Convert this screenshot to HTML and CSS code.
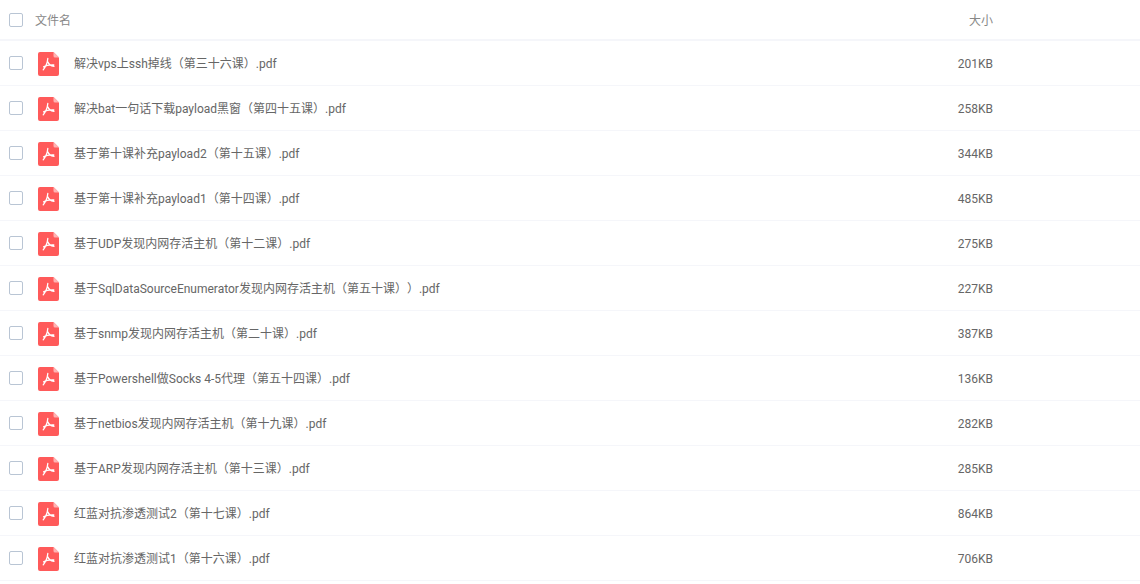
FILE: index.html
```html
<!DOCTYPE html>
<html lang="zh-CN">
<head>
    <meta charset="UTF-8">
    <title>文件列表</title>
    <link rel="stylesheet" href="styles.css">
</head>
<body>
    <svg class="icon-defs" width="0" height="0">
        <symbol id="pdf" viewBox="0 0 21 24">
            <path d="M2 0H15.5L21 5.5V22a2 2 0 0 1-2 2H2a2 2 0 0 1-2-2V2a2 2 0 0 1 2-2z" fill="#ff5a5a"/>
            <path d="M15.5 0L21 5.5H17a1.500 1.500 0 0 1-1.500-1.500z" fill="#ffb3b3"/>
            <path d="M9.800 6.500C9.500 9.800 8.300 14 5.200 17.800M9.800 9.800C10.600 12.500 12.500 14 16 14.300M5.600 14.900C8 13.300 11 12.800 15.800 13" fill="none" stroke="#fff" stroke-width="1.300" stroke-linecap="round"/>
        </symbol>
    </svg>
    <div class="file-list">
        <div class="list-head">
            <span class="check"></span>
            <span class="head-name">文件名</span>
            <span class="head-size">大小</span>
        </div>
        <div class="file-row">
            <span class="check"></span>
            <svg class="file-icon"><use href="#pdf"/></svg>
            <span class="file-name">解决vps上ssh掉线（第三十六课）.pdf</span>
            <span class="file-size">201KB</span>
        </div>
        <div class="file-row">
            <span class="check"></span>
            <svg class="file-icon"><use href="#pdf"/></svg>
            <span class="file-name">解决bat一句话下载payload黑窗（第四十五课）.pdf</span>
            <span class="file-size">258KB</span>
        </div>
        <div class="file-row">
            <span class="check"></span>
            <svg class="file-icon"><use href="#pdf"/></svg>
            <span class="file-name">基于第十课补充payload2（第十五课）.pdf</span>
            <span class="file-size">344KB</span>
        </div>
        <div class="file-row">
            <span class="check"></span>
            <svg class="file-icon"><use href="#pdf"/></svg>
            <span class="file-name">基于第十课补充payload1（第十四课）.pdf</span>
            <span class="file-size">485KB</span>
        </div>
        <div class="file-row">
            <span class="check"></span>
            <svg class="file-icon"><use href="#pdf"/></svg>
            <span class="file-name">基于UDP发现内网存活主机（第十二课）.pdf</span>
            <span class="file-size">275KB</span>
        </div>
        <div class="file-row">
            <span class="check"></span>
            <svg class="file-icon"><use href="#pdf"/></svg>
            <span class="file-name">基于SqlDataSourceEnumerator发现内网存活主机（第五十课））.pdf</span>
            <span class="file-size">227KB</span>
        </div>
        <div class="file-row">
            <span class="check"></span>
            <svg class="file-icon"><use href="#pdf"/></svg>
            <span class="file-name">基于snmp发现内网存活主机（第二十课）.pdf</span>
            <span class="file-size">387KB</span>
        </div>
        <div class="file-row">
            <span class="check"></span>
            <svg class="file-icon"><use href="#pdf"/></svg>
            <span class="file-name">基于Powershell做Socks 4-5代理（第五十四课）.pdf</span>
            <span class="file-size">136KB</span>
        </div>
        <div class="file-row">
            <span class="check"></span>
            <svg class="file-icon"><use href="#pdf"/></svg>
            <span class="file-name">基于netbios发现内网存活主机（第十九课）.pdf</span>
            <span class="file-size">282KB</span>
        </div>
        <div class="file-row">
            <span class="check"></span>
            <svg class="file-icon"><use href="#pdf"/></svg>
            <span class="file-name">基于ARP发现内网存活主机（第十三课）.pdf</span>
            <span class="file-size">285KB</span>
        </div>
        <div class="file-row">
            <span class="check"></span>
            <svg class="file-icon"><use href="#pdf"/></svg>
            <span class="file-name">红蓝对抗渗透测试2（第十七课）.pdf</span>
            <span class="file-size">864KB</span>
        </div>
        <div class="file-row">
            <span class="check"></span>
            <svg class="file-icon"><use href="#pdf"/></svg>
            <span class="file-name">红蓝对抗渗透测试1（第十六课）.pdf</span>
            <span class="file-size">706KB</span>
        </div>
    </div>
</body>
</html>
```

FILE: styles.css
```css
html, body {
    height: 100%;
    overflow: hidden;
}
body {
    margin: 0;
    background: #fff;
    font-family: Roboto, "Noto Sans CJK SC", sans-serif;
    font-size: 12px;
    line-height: 18px;
    color: #666;
    text-spacing-trim: space-all;
}
.icon-defs {
    display: block;
}
.list-head {
    display: flex;
    align-items: center;
    height: 39px;
    padding-left: 9px;
    border-bottom: 2px solid #f5f6fa;
    color: #888;
}
.head-name {
    margin-left: 12px;
    padding-top: 2px;
}
.head-size {
    margin-left: auto;
    margin-right: 147px;
    padding-top: 2px;
}
.file-row {
    display: flex;
    align-items: center;
    height: 44px;
    padding-left: 9px;
    border-bottom: 1px solid #f5f6fa;
}
.check {
    width: 12px;
    height: 12px;
    flex: none;
    border: 1px solid #b9c5d4;
    border-radius: 2px;
}
.file-icon {
    width: 21px;
    height: 24px;
    flex: none;
    margin: 2px 0 0 15px;
}
.file-name {
    margin-left: 15px;
    padding-top: 2px;
}
.file-size {
    margin-left: auto;
    margin-right: 147px;
    padding-top: 1px;
}
```
